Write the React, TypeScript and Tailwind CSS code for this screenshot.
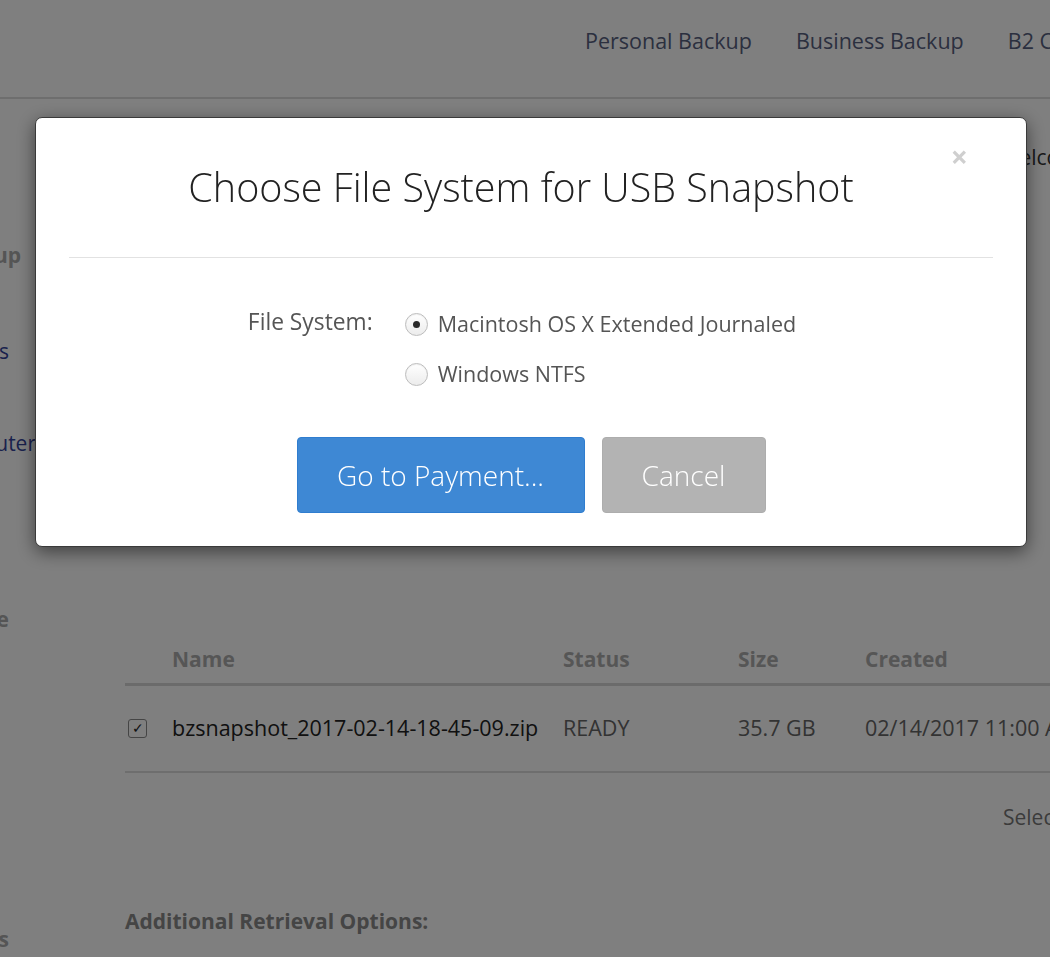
import React, { useState } from 'react';

const font = { fontFamily: '"Open Sans", "Liberation Sans", sans-serif' };

const Sidebar: React.FC = () => {
  const rows: { text: string; top: string; w: string; cls: string }[] = [
    { text: 'Personal Backup', top: 'mt-[142px]', w: 'w-[21px]', cls: 'font-bold text-[#aaaaaa]' },
    { text: 'Restore Files', top: 'mt-[68px]', w: 'w-[9px]', cls: 'text-[#34439a]' },
    { text: 'Locate Computer', top: 'mt-[64px]', w: 'w-[36px]', cls: 'text-[#34439a]' },
    { text: 'Preference', top: 'mt-[148px]', w: 'w-[9px]', cls: 'font-bold text-[#aaaaaa]' },
    { text: 'Settings', top: 'mt-[292px]', w: 'w-[9px]', cls: 'font-bold text-[#aaaaaa]' },
  ];
  return (
    <div className="w-[22px] shrink-0">
      {rows.map((r) => (
        <div
          key={r.text}
          className={`${r.top} ${r.w} overflow-hidden flex justify-end whitespace-nowrap text-[21px] leading-[28px] ${r.cls}`}
        >
          {r.text}
        </div>
      ))}
    </div>
  );
};

const Page: React.FC = () => (
  <div className="min-h-screen bg-white overflow-hidden" style={font}>
    {/* Header */}
    <header className="h-[99px] border-b-2 border-[#dcdcdc] overflow-hidden">
      <nav className="flex gap-[44px] pl-[585px] pt-[25px] text-[21.5px] text-[#57607e] whitespace-nowrap">
        <span>Personal Backup</span>
        <span>Business Backup</span>
        <span>B2 Cloud Storage</span>
      </nav>
    </header>

    <div className="flex">
      <Sidebar />
      <main className="flex-1 pl-[103px] overflow-hidden">
        <div className="pl-[875px] pt-[43px] text-[21px] text-[#333] whitespace-nowrap">Welcome back</div>

        <div className="mt-[464px]">
          <div className="flex text-[21px] font-bold text-[#adadad] h-[48px] items-center border-b-[3px] border-[#d6d6d6] whitespace-nowrap">
            <div className="w-[47px] shrink-0" />
            <div className="w-[391px] shrink-0">Name</div>
            <div className="w-[175px] shrink-0">Status</div>
            <div className="w-[127px] shrink-0">Size</div>
            <div>Created</div>
          </div>
          <div className="flex text-[21.5px] h-[87px] items-center border-b-2 border-[#dddddd] whitespace-nowrap">
            <div className="w-[47px] shrink-0 pl-[3px]">
              <div className="w-[19px] h-[19px] border border-[#8a8a8a] rounded-[3px] bg-white flex items-center justify-center text-[14px] text-[#222] leading-none">
                ✓
              </div>
            </div>
            <div className="w-[391px] shrink-0 text-[#222]">bzsnapshot_2017-02-14-18-45-09.zip</div>
            <div className="w-[175px] shrink-0 text-[#666]">READY</div>
            <div className="w-[127px] shrink-0 text-[#666]">35.7 GB</div>
            <div className="text-[#666]">02/14/2017 11:00 AM</div>
          </div>
          <div className="pl-[878px] pt-[29px] text-[21px] text-[#777] whitespace-nowrap">Select All</div>
          <div className="mt-[73px] text-[21px] font-bold text-[#8a8a8a] whitespace-nowrap">
            Additional Retrieval Options:
          </div>
        </div>
      </main>
    </div>
  </div>
);

const Radio: React.FC<{ checked: boolean; label: string; onClick: () => void }> = ({ checked, label, onClick }) => (
  <label className="flex items-center gap-[10px] cursor-pointer" onClick={onClick}>
    <span className="w-[23px] h-[23px] rounded-full border border-[#bdbdbd] bg-gradient-to-b from-white to-[#ececec] shadow-[inset_0_1px_1px_rgba(0,0,0,0.06)] flex items-center justify-center">
      {checked && <span className="w-[7px] h-[7px] rounded-full bg-[#2a2a2a]" />}
    </span>
    <span className="text-[21.5px] text-[#555]">{label}</span>
  </label>
);

const Modal: React.FC = () => {
  const [fs, setFs] = useState('mac');
  return (
    <div className="fixed inset-0 bg-black/50" style={font}>
      <div className="ml-[35px] mt-[117px] w-[992px] h-[430px] bg-white rounded-[7px] border border-[#3a3a3a] shadow-[0_5px_18px_rgba(0,0,0,0.5)] relative px-[33px]">
        <button className="absolute right-[58px] top-[24px] text-[30px] leading-none font-bold text-[#cfcfcf]">×</button>
        <div className="border-b border-[#e2e2e2]">
          <h1 className="text-center text-[39.5px] font-light text-[#222] pt-[42px] pb-[43px] pr-[20px] leading-[54px]">
            Choose File System for USB Snapshot
          </h1>
        </div>
        <div className="flex justify-center pt-[50px] pr-[18px]">
          <div className="flex gap-[32px]">
            <div className="text-[22.8px] text-[#555] leading-[28px]">File System:</div>
            <div className="flex flex-col gap-[18px]">
              <Radio checked={fs === 'mac'} label="Macintosh OS X Extended Journaled" onClick={() => setFs('mac')} />
              <Radio checked={fs === 'ntfs'} label="Windows NTFS" onClick={() => setFs('ntfs')} />
            </div>
          </div>
        </div>
        <div className="flex justify-center gap-[17px] pt-[46px]">
          <button className="w-[288px] h-[76px] rounded-[4px] bg-[#3e88d4] border border-[#2f7dcf] text-white text-[28px] font-light">
            Go to Payment...
          </button>
          <button className="w-[164px] h-[76px] rounded-[4px] bg-[#b3b3b3] border border-[#adadad] text-white text-[28px] font-light">
            Cancel
          </button>
        </div>
      </div>
    </div>
  );
};

export default function App() {
  return (
    <div className="relative">
      <Page />
      <Modal />
    </div>
  );
}
